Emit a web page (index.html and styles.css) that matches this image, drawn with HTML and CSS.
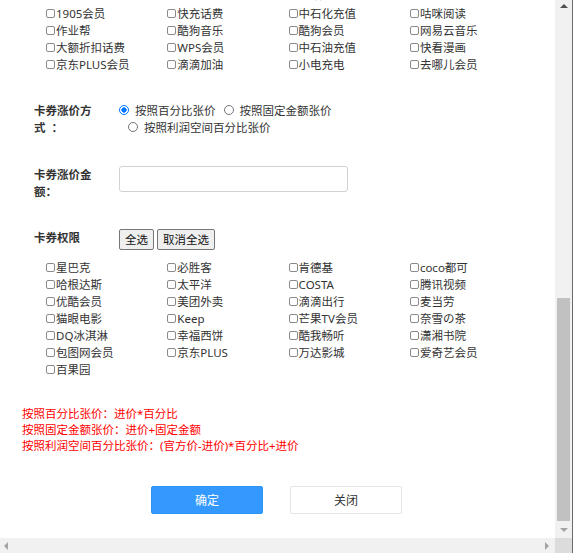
FILE: index.html
```html
<!DOCTYPE html>
<html lang="zh-CN">
<head>
<meta charset="utf-8">
<title>卡券涨价</title>
<link rel="stylesheet" href="styles.css">
</head>
<body>
<div class="window">
  <div class="viewport">
    <div class="peek">
      <div class="cbgrid peek-grid">
        <label class="cb"><input type="checkbox">爱奇艺会员卡</label>
        <label class="cb"><input type="checkbox">腾讯视频会员卡</label>
        <label class="cb"><input type="checkbox">优酷会员</label>
        <label class="cb"><input type="checkbox">芒果TV会员卡券</label>
      </div>
    </div>
    <div class="cbgrid">
      <label class="cb"><input type="checkbox">1905会员</label>
      <label class="cb"><input type="checkbox">快充话费</label>
      <label class="cb"><input type="checkbox">中石化充值</label>
      <label class="cb"><input type="checkbox">咕咪阅读</label>
      <label class="cb"><input type="checkbox">作业帮</label>
      <label class="cb"><input type="checkbox">酷狗音乐</label>
      <label class="cb"><input type="checkbox">酷狗会员</label>
      <label class="cb"><input type="checkbox">网易云音乐</label>
      <label class="cb"><input type="checkbox">大额折扣话费</label>
      <label class="cb"><input type="checkbox">WPS会员</label>
      <label class="cb"><input type="checkbox">中石油充值</label>
      <label class="cb"><input type="checkbox">快看漫画</label>
      <label class="cb"><input type="checkbox">京东PLUS会员</label>
      <label class="cb"><input type="checkbox">滴滴加油</label>
      <label class="cb"><input type="checkbox">小电充电</label>
      <label class="cb"><input type="checkbox">去哪儿会员</label>
    </div>

    <div class="form-row row-mode">
      <div class="label">卡券涨价方式&nbsp; ：</div>
      <div class="field radios"><label class="radio"><input type="radio" name="mode" checked>按照百分比张价</label><label class="radio r2"><input type="radio" name="mode">按照固定金额张价</label><label class="radio r3"><input type="radio" name="mode">按照利润空间百分比张价</label></div>
    </div>

    <div class="form-row row-amount">
      <div class="label">卡券涨价金额：</div>
      <div class="field"><input class="text-input" type="text"></div>
    </div>

    <div class="form-row row-perm">
      <div class="label">卡券权限</div>
      <div class="field btns"><button class="btn-sm">全选</button><button class="btn-sm">取消全选</button></div>
    </div>

    <div class="cbgrid grid-perm">
      <label class="cb"><input type="checkbox">星巴克</label>
      <label class="cb"><input type="checkbox">必胜客</label>
      <label class="cb"><input type="checkbox">肯德基</label>
      <label class="cb"><input type="checkbox">coco都可</label>
      <label class="cb"><input type="checkbox">哈根达斯</label>
      <label class="cb"><input type="checkbox">太平洋</label>
      <label class="cb"><input type="checkbox">COSTA</label>
      <label class="cb"><input type="checkbox">腾讯视频</label>
      <label class="cb"><input type="checkbox">优酷会员</label>
      <label class="cb"><input type="checkbox">美团外卖</label>
      <label class="cb"><input type="checkbox">滴滴出行</label>
      <label class="cb"><input type="checkbox">麦当劳</label>
      <label class="cb"><input type="checkbox">猫眼电影</label>
      <label class="cb"><input type="checkbox">Keep</label>
      <label class="cb"><input type="checkbox">芒果TV会员</label>
      <label class="cb"><input type="checkbox">奈雪の茶</label>
      <label class="cb"><input type="checkbox">DQ冰淇淋</label>
      <label class="cb"><input type="checkbox">幸福西饼</label>
      <label class="cb"><input type="checkbox">酷我畅听</label>
      <label class="cb"><input type="checkbox">潇湘书院</label>
      <label class="cb"><input type="checkbox">包图网会员</label>
      <label class="cb"><input type="checkbox">京东PLUS</label>
      <label class="cb"><input type="checkbox">万达影城</label>
      <label class="cb"><input type="checkbox">爱奇艺会员</label>
      <label class="cb"><input type="checkbox">百果园</label>
    </div>

    <div class="notes">
      <p>按照百分比张价：进价*百分比</p>
      <p>按照固定金额张价：进价+固定金额</p>
      <p>按照利润空间百分比张价：(官方价-进价)*百分比+进价</p>
    </div>

    <div class="actions">
      <button class="btn btn-primary">确定</button>
      <button class="btn btn-default">关闭</button>
    </div>
  </div>

  <div class="vscroll">
    <div class="sb-btn sb-up"><span class="tri-up"></span></div>
    <div class="track"><div class="thumb"></div></div>
    <div class="sb-btn sb-down"><span class="tri-down"></span></div>
  </div>
  <div class="edge"></div>
  <div class="hscroll">
    <span class="tri-left"></span>
    <span class="tri-right"></span>
  </div>
  <div class="corner"></div>
</div>
</body>
</html>
```
FILE: styles.css
```css
* { box-sizing: border-box; }

body {
  margin: 0;
  font-family: "Noto Sans", "Noto Sans CJK SC", sans-serif;
  font-size: 11.5px;
  color: #333;
  background: #fff;
}

.window {
  display: grid;
  grid-template-columns: 555px 17px 1px;
  grid-template-rows: 538px 15px;
  width: 573px;
  height: 553px;
}

.viewport {
  overflow: hidden;
  background: #fff;
}

.peek {
  height: 5px;
  overflow: hidden;
  display: flex;
  flex-direction: column;
  justify-content: flex-end;
}

.cbgrid {
  display: grid;
  grid-template-columns: repeat(4, 121.3px);
  grid-auto-rows: 17px;
  padding-left: 46px;
  flex: none;
}

.peek-grid { padding-bottom: 2.5px; }

.cb {
  display: flex;
  align-items: center;
  white-space: nowrap;
  line-height: 17px;
}

.cb input {
  appearance: none;
  -webkit-appearance: none;
  width: 9px;
  height: 9px;
  margin: 0 1px 0 0;
  border: 1px solid #8a8a8a;
  border-radius: 2px;
  background: #fff;
  flex: none;
}

.form-row {
  display: flex;
  align-items: flex-start;
  padding-left: 34px;
}

.label {
  width: 85px;
  flex: none;
  padding-right: 23px;
  font-weight: bold;
  line-height: 17px;
  color: #333;
}

.row-mode { margin-top: 28.5px; }
.row-amount { margin-top: 30px; }
.row-perm { margin-top: 29.5px; }

.radios {
  width: 229px;
  line-height: 17px;
}

.radio {
  display: inline-flex;
  align-items: center;
  height: 17px;
  vertical-align: top;
  white-space: nowrap;
}

.radio input {
  appearance: none;
  -webkit-appearance: none;
  width: 10px;
  height: 10px;
  margin: 0 6px 0 0;
  border: 1px solid #767676;
  border-radius: 50%;
  background: #fff;
  flex: none;
}

.radio input:checked {
  border-color: #0075ff;
  background: radial-gradient(circle, #0075ff 0 2.4px, #fff 2.9px);
}

.r2 { margin-left: 8px; }
.r3 { margin-left: 9px; }

.text-input {
  display: block;
  width: 229px;
  height: 26px;
  border: 1px solid #d2d2d2;
  border-radius: 3px;
  background: #fff;
  font: inherit;
}

.btns {
  display: flex;
  gap: 3px;
}

.btn-sm {
  height: 21px;
  padding: 0 5px;
  border: 1px solid #767676;
  border-radius: 2px;
  background: #efefef;
  font: inherit;
  color: #111;
  line-height: 19px;
}

.grid-perm { margin-top: 8.5px; }

.notes {
  margin-top: 28.5px;
  padding-left: 22px;
  color: #ff0000;
  line-height: 16px;
}

.notes p { margin: 0; }

.actions {
  margin-top: 32px;
  display: flex;
  justify-content: center;
  gap: 27px;
  padding-right: 2px;
}

.btn {
  width: 112px;
  height: 28px;
  border-radius: 2px;
  font: inherit;
  font-size: 12px;
  cursor: pointer;
}

.btn-primary {
  background: #3399ff;
  border: 1px solid #2f93f5;
  color: #fff;
}

.btn-default {
  background: #fff;
  border: 1px solid #e4e4e4;
  color: #333;
}

/* scrollbars */
.vscroll {
  display: flex;
  flex-direction: column;
  background: #f1f1f1;
}

.sb-btn {
  display: flex;
  align-items: center;
  justify-content: center;
  flex: none;
}

.sb-up { height: 11px; }
.sb-down { height: 17px; }

.track {
  flex: 1;
  display: flex;
  flex-direction: column;
  justify-content: flex-end;
  padding: 0 2px;
}

.thumb {
  height: 223px;
  background: #c1c1c1;
}

.tri-up {
  width: 0;
  height: 0;
  border-left: 4px solid transparent;
  border-right: 4px solid transparent;
  border-bottom: 4px solid #505050;
}

.tri-down {
  width: 0;
  height: 0;
  border-left: 4px solid transparent;
  border-right: 4px solid transparent;
  border-top: 4px solid #a3a3a3;
}

.edge {
  grid-row: 1 / 3;
  grid-column: 3;
  background: #6a6a6a;
}

.hscroll {
  display: flex;
  align-items: center;
  justify-content: space-between;
  padding: 0 6px 0 4px;
  background: #f1f1f1;
}

.tri-left {
  width: 0;
  height: 0;
  border-top: 4.5px solid transparent;
  border-bottom: 4.5px solid transparent;
  border-right: 4px solid #a3a3a3;
}

.tri-right {
  width: 0;
  height: 0;
  border-top: 4.5px solid transparent;
  border-bottom: 4.5px solid transparent;
  border-left: 4px solid #a3a3a3;
}

.corner {
  background: #dcdcdc;
}
```
